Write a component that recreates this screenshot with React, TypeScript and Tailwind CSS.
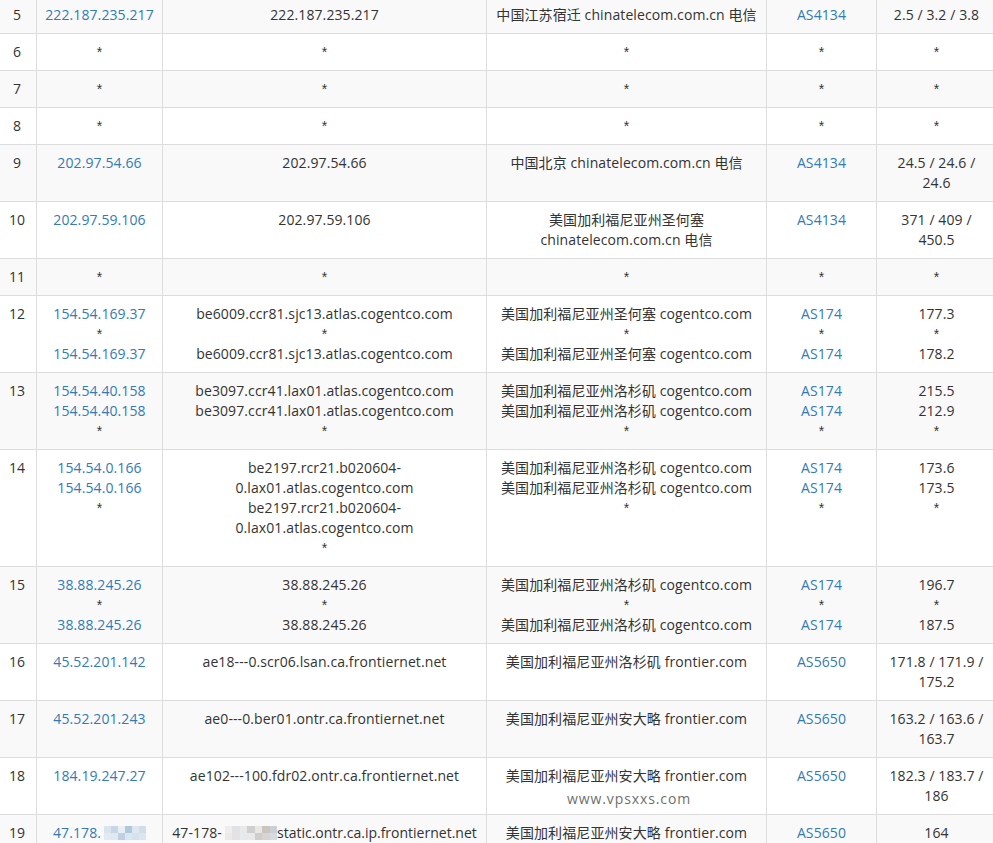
const FONT = '[font-family:"Open_Sans","Noto_Sans_CJK_SC",sans-serif]';

type Row = {
  n: number;
  ip: string[];
  host: string[];
  geo: string[];
  as: string[];
  rtt: string[];
};

const tel = 'chinatelecom.com.cn 电信';
const sj = '美国加利福尼亚州圣何塞 cogentco.com';
const la = '美国加利福尼亚州洛杉矶 cogentco.com';
const onl = '美国加利福尼亚州安大略 frontier.com';

const rows: Row[] = [
  { n: 5, ip: ['222.187.235.217'], host: ['222.187.235.217'], geo: ['中国江苏宿迁 ' + tel], as: ['AS4134'], rtt: ['2.5 / 3.2 / 3.8'] },
  { n: 6, ip: ['*'], host: ['*'], geo: ['*'], as: ['*'], rtt: ['*'] },
  { n: 7, ip: ['*'], host: ['*'], geo: ['*'], as: ['*'], rtt: ['*'] },
  { n: 8, ip: ['*'], host: ['*'], geo: ['*'], as: ['*'], rtt: ['*'] },
  { n: 9, ip: ['202.97.54.66'], host: ['202.97.54.66'], geo: ['中国北京 ' + tel], as: ['AS4134'], rtt: ['24.5 / 24.6 /', '24.6'] },
  { n: 10, ip: ['202.97.59.106'], host: ['202.97.59.106'], geo: ['美国加利福尼亚州圣何塞', tel], as: ['AS4134'], rtt: ['371 / 409 /', '450.5'] },
  { n: 11, ip: ['*'], host: ['*'], geo: ['*'], as: ['*'], rtt: ['*'] },
  { n: 12, ip: ['154.54.169.37', '*', '154.54.169.37'], host: ['be6009.ccr81.sjc13.atlas.cogentco.com', '*', 'be6009.ccr81.sjc13.atlas.cogentco.com'], geo: [sj, '*', sj], as: ['AS174', '*', 'AS174'], rtt: ['177.3', '*', '178.2'] },
  { n: 13, ip: ['154.54.40.158', '154.54.40.158', '*'], host: ['be3097.ccr41.lax01.atlas.cogentco.com', 'be3097.ccr41.lax01.atlas.cogentco.com', '*'], geo: [la, la, '*'], as: ['AS174', 'AS174', '*'], rtt: ['215.5', '212.9', '*'] },
  { n: 14, ip: ['154.54.0.166', '154.54.0.166', '*'], host: ['be2197.rcr21.b020604-', '0.lax01.atlas.cogentco.com', 'be2197.rcr21.b020604-', '0.lax01.atlas.cogentco.com', '*'], geo: [la, la, '*'], as: ['AS174', 'AS174', '*'], rtt: ['173.6', '173.5', '*'] },
  { n: 15, ip: ['38.88.245.26', '*', '38.88.245.26'], host: ['38.88.245.26', '*', '38.88.245.26'], geo: [la, '*', la], as: ['AS174', '*', 'AS174'], rtt: ['196.7', '*', '187.5'] },
  { n: 16, ip: ['45.52.201.142'], host: ['ae18---0.scr06.lsan.ca.frontiernet.net'], geo: ['美国加利福尼亚州洛杉矶 frontier.com'], as: ['AS5650'], rtt: ['171.8 / 171.9 /', '175.2'] },
  { n: 17, ip: ['45.52.201.243'], host: ['ae0---0.ber01.ontr.ca.frontiernet.net'], geo: [onl], as: ['AS5650'], rtt: ['163.2 / 163.6 /', '163.7'] },
  { n: 18, ip: ['184.19.247.27'], host: ['ae102---100.fdr02.ontr.ca.frontiernet.net'], geo: [onl], as: ['AS5650'], rtt: ['182.3 / 183.7 /', '186'] },
];

// pixelated blur over the address parts that were hidden in the screenshot
const ipMosaic = ['#d8e4ee', '#c6d6e6', '#e8eef4', '#aec8de', '#dde8f1', '#d0dee9', '#e2eaf2', '#e0e8f0', '#bdd0e4', '#dbe7f0', '#d5e1ec', '#dde6f0'];
const hostMosaic = ['#efeeed', '#dfe3e6', '#e8e9ea', '#cfcfcf', '#e9e7e5', '#cbc5bd', '#c9d0da', '#eceae9', '#e4e3e2', '#e6eaed', '#e9e9e9', '#cfcdcb', '#d6d5d4', '#d8dade'];

function Mosaic({ colors, cols, className }: { colors: string[]; cols: number; className: string }) {
  return (
    <span
      className={`inline-grid align-[5px] ${className}`}
      style={{ gridTemplateColumns: `repeat(${cols}, 1fr)` }}
    >
      {colors.map((c, i) => (
        <span key={i} className="h-[7px]" style={{ backgroundColor: c }} />
      ))}
    </span>
  );
}

function Lines({ items, link }: { items: string[]; link?: boolean }) {
  return (
    <>
      {items.map((t, i) =>
        t === '*' ? (
          <div key={i} className='[font-family:"Liberation_Sans",sans-serif]'>*</div>
        ) : (
          <div key={i} className={link ? 'text-[#337ab7]' : ''}>
            {t}
          </div>
        ),
      )}
    </>
  );
}

const td = 'border border-[#ddd] p-2 align-top text-center';

export default function App() {
  return (
    <div className={`relative h-[843px] w-[993px] overflow-hidden bg-white text-[14px] leading-[20px] tracking-[0.1px] text-[#333] ${FONT}`}>
      <table className="-mt-[4px] -ml-[3px] w-[999px] table-fixed border-collapse">
        <colgroup>
          <col className="w-[39px]" />
          <col className="w-[126px]" />
          <col className="w-[324px]" />
          <col className="w-[280px]" />
          <col className="w-[110px]" />
          <col className="w-[120px]" />
        </colgroup>
        <tbody>
          {rows.map((r, i) => (
            <tr key={r.n} className={i % 2 === 0 ? 'bg-[#f9f9f9]' : ''}>
              <td className={td}>{r.n}</td>
              <td className={td}><Lines items={r.ip} link /></td>
              <td className={td}><Lines items={r.host} /></td>
              <td className={td}><Lines items={r.geo} /></td>
              <td className={td}><Lines items={r.as} link /></td>
              <td className={td}><Lines items={r.rtt} /></td>
            </tr>
          ))}
          <tr className="bg-[#f9f9f9]">
            <td className={td}>19</td>
            <td className={`${td} whitespace-nowrap`}>
              <span className="text-[#337ab7]">47.178.</span>
              <Mosaic colors={ipMosaic} cols={6} className="ml-[3px] w-[42px]" />
            </td>
            <td className={`${td} whitespace-nowrap`}>
              47-178-
              <Mosaic colors={hostMosaic} cols={7} className="ml-[3px] w-[52px]" />
              <span className="tracking-normal">static.ontr.ca.ip.frontiernet.net</span>
            </td>
            <td className={td}>{onl}</td>
            <td className={td}><Lines items={['AS5650']} link /></td>
            <td className={td}>164</td>
          </tr>
        </tbody>
      </table>
      <div className="absolute left-[567px] top-[789px] text-[14px] tracking-[0.9px] text-[#6f6f6f]">www.vpsxxs.com</div>
    </div>
  );
}
